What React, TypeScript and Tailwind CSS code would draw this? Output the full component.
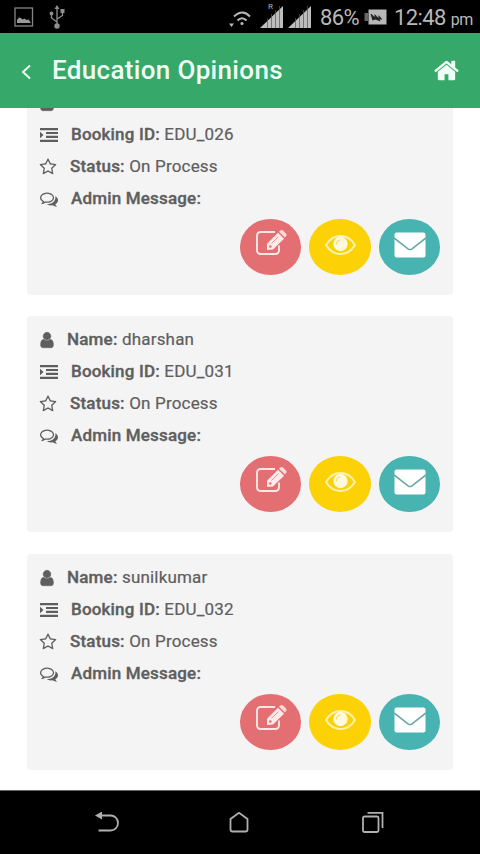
import type { ReactNode } from "react";

// the first card is scrolled under the header, its name row is hidden
const bookings = [
  { name: null, id: "EDU_026", status: "On Process", message: "" },
  { name: "dharshan", id: "EDU_031", status: "On Process", message: "" },
  { name: "sunilkumar", id: "EDU_032", status: "On Process", message: "" },
];

function UserIcon() {
  return (
    <svg viewBox="0 0 1792 1792" className="w-[18px] h-[18px] -ml-0.5 shrink-0" fill="currentColor" stroke="currentColor" strokeWidth="50">
      <path d="M1536 1399q0 109-62.5 187t-150.5 78h-854q-88 0-150.5-78t-62.5-187q0-85 8.5-160.5t31.5-152 58.5-131 94-89 134.5-34.5q131 128 313 128t313-128q76 0 134.5 34.5t94 89 58.5 131 31.5 152 8.5 160.5zm-256-887q0 159-112.5 271.5t-271.5 112.5-271.5-112.5-112.5-271.5 112.5-271.5 271.5-112.5 271.5 112.5 112.5 271.5z" />
    </svg>
  );
}

function IndentIcon() {
  return (
    <svg viewBox="0 0 18 16" className="w-[18px] h-4 shrink-0" fill="currentColor">
      <path d="M0 1h18v2.200H0zM6 4.900h12v2.200H6zM6 8.800h12V11H6zM0 12.700h18v2.200H0zM0 4.800 3.500 8 0 11.200z" />
    </svg>
  );
}

function StarIcon() {
  return (
    <svg viewBox="0 0 1792 1792" className="w-[18px] h-[18px] -ml-px shrink-0" fill="currentColor">
      <path d="M1201 1004l306-297-422-62-189-382-189 382-422 62 306 297-73 421 378-199 377 199zm527-357q0 22-26 48l-363 354 86 500q1 7 1 20 0 50-41 50-19 0-40-12l-449-236-449 236q-22 12-40 12-21 0-31.5-14.5t-10.5-35.5q0-6 2-20l86-500-364-354q-25-27-25-48 0-37 56-46l502-73 225-455q19-41 49-41t49 41l225 455 502 73q56 9 56 46z" />
    </svg>
  );
}

function CommentsIcon() {
  return (
    <svg viewBox="0 0 1792 1792" className="w-[18px] h-[18px] shrink-0" fill="currentColor">
      <path d="M704 384q-153 0-286 52t-211.5 141-78.5 191q0 82 53 158t149 132l97 56-35 84q34-20 62-39l44-31 53 10q78 14 153 14 153 0 286-52t211.5-141 78.5-191-78.5-191-211.5-141-286-52zm0-128q191 0 353.5 68.5t256.5 186.5 94 257-94 257-256.5 186.5-353.5 68.5q-86 0-176-16-124 88-278 128-36 9-86 16h-3q-11 0-20.5-8t-11.5-21q-1-3-1-6.5t.5-6.5 2-6l2.5-5 3.5-5.5 4-5 4.5-5 4-4.5q5-6 23-25t26-29.5 22.5-29 25-38.5 20.5-44q-124-72-195-177t-71-224q0-139 94-257t256.5-186.5 353.5-68.5zm822 1169q10 24 20.5 44t25 38.5 22.5 29 26 29.5 23 25q1 1 4 4.5t4.5 5 4 5 3.5 5.5l2.5 5 2 6 .5 6.5-1 6.5q-3 14-13 22t-22 7q-50-7-86-16-154-40-278-128-90 16-176 16-271 0-472-132 58 4 88 4 161 0 309-45t264-129q125-92 192-212t67-254q0-77-23-152 129 71 204 178t75 230q0 120-71 224.5t-195 176.5z" />
    </svg>
  );
}

function HomeIcon() {
  return (
    <svg viewBox="0 0 1792 1792" className="w-[27px] h-[27px]" fill="currentColor">
      <path d="M1472 992v480q0 26-19 45t-45 19h-384v-384h-256v384h-384q-26 0-45-19t-19-45v-480q0-1 .5-3t.5-3l575-474 575 474q1 2 1 6zm223-69l-62 74q-8 9-21 11h-3q-13 0-21-7l-692-577-692 577q-12 8-24 7-13-2-21-11l-62-74q-8-10-7-23.5t11-21.5l719-599q32-26 76-26t76 26l244 204v-195q0-14 9-23t23-9h192q14 0 23 9t9 23v408l219 182q10 8 11 21.5t-7 23.5z" />
    </svg>
  );
}

function EditIcon() {
  return (
    <svg viewBox="0 0 32 28" className="w-8 h-7" fill="none">
      <path d="M20 3H5.500A3.500 3.500 0 0 0 2 6.500v15A3.500 3.500 0 0 0 5.500 25h15a3.500 3.500 0 0 0 3.500-3.500v-5" stroke="#ffe6e6" strokeWidth="1.900" />
      <path d="M12 21v-6.300L23 3.700l6 6L18 20.500z" fill="#ffeaea" />
      <path d="m24 2.700 1.400-1.300q1.300-1 2.600 0l3 3q1.200 1.300 0 2.600L29.900 8.500z" fill="#ffdada" />
      <path d="m16.500 14.500 6.800-6.800" stroke="#e9898b" strokeWidth="0.900" />
      <circle cx="15.300" cy="17.500" r="1.300" fill="#e46f72" />
    </svg>
  );
}

function EyeIcon() {
  return (
    <svg viewBox="0 0 32 22" className="w-8 h-[22px]" fill="none">
      <path d="M2 11C5.500 5.300 10.200 2 16.500 2S27.500 5.300 31 11c-3.500 5.700-8.200 8.900-14.500 8.900S5.500 16.700 2 11z" stroke="#fff3b0" strokeWidth="2" />
      <circle cx="16.500" cy="10" r="7.200" fill="#fffadf" />
      <path d="M12.500 10a4.200 4.200 0 0 1 3.500-4" stroke="#fbdc5a" strokeWidth="1.200" strokeLinecap="round" />
    </svg>
  );
}

function MailIcon() {
  return (
    <svg viewBox="0 0 32 26" className="w-8 h-[26px]" fill="none">
      <rect x="0.500" y="0.500" width="31" height="25" rx="2" fill="#fff" />
      <path d="m0 6 14 10.800q2 1.400 4 0L32 6" stroke="#6aa9a6" strokeWidth="1.600" />
    </svg>
  );
}

function Row({ icon, label, value, gap }: { icon: ReactNode; label?: string; value?: string; gap: string }) {
  return (
    <div className={`flex items-center h-8 whitespace-nowrap ${gap}`}>
      {icon}
      {label && (
        <p className="[-webkit-text-stroke:0.2px_#5e5e5e]">
          <span className="font-medium [-webkit-text-stroke:0.35px_#5e5e5e]">{label}:</span> {value}
        </p>
      )}
    </div>
  );
}

function BookingCard({ name, id, status, message }: (typeof bookings)[number]) {
  return (
    <div className="h-[216px] shrink-0 rounded bg-[#f4f4f4] px-[13px] pt-2 text-[#5e5e5e] text-[17px] tracking-[0.18px]">
      <Row icon={<UserIcon />} label={name ? "Name" : undefined} value={name ?? undefined} gap="gap-[11px]" />
      <Row icon={<IndentIcon />} label="Booking ID" value={id} gap="gap-[13px]" />
      <Row icon={<StarIcon />} label="Status" value={status} gap="gap-[13px]" />
      <Row icon={<CommentsIcon />} label="Admin Message" value={message} gap="gap-[13px]" />
      <div className="flex justify-end gap-2 mt-1">
        <button className="w-[61.500px] h-14 rounded-[50%] bg-[#e46f72] flex justify-center pt-[10px] pl-px">
          <EditIcon />
        </button>
        <button className="w-[61.500px] h-14 rounded-[50%] bg-[#fcd106] flex justify-center pt-[15px]">
          <EyeIcon />
        </button>
        <button className="w-[61.500px] h-14 rounded-[50%] bg-[#47b4b2] flex justify-center pt-[13px] pl-px">
          <MailIcon />
        </button>
      </div>
    </div>
  );
}

function Signal() {
  return (
    <svg viewBox="0 0 23 22" className="w-[23px] h-[22px]">
      <path d="M0 22 23 0v22z" fill="#bdbdbd" />
      <path d="M7.500 12v10M11.500 8v14M15.500 4v18M19.500 0v22" stroke="#555" strokeWidth="0.700" />
    </svg>
  );
}

function StatusBar() {
  return (
    <div className="h-[33px] shrink-0 bg-black text-[#b8b8b8] flex items-center pl-[14px]">
      <svg viewBox="0 0 20 20" className="w-5 h-5" fill="none">
        <rect x="1" y="1" width="17.500" height="18" stroke="#858585" strokeWidth="1.300" />
        <path d="M3 16v-3l2-2.500 2 .5 1.500 1.500 2-1 2 1.500 2-.5L16.500 15v1z" fill="#999" />
      </svg>
      <svg viewBox="0 0 16 24" className="w-4 h-6 ml-[15px]" fill="none" stroke="#8f8f8f" strokeWidth="1.300">
        <path d="M8 3v18M8 17l-5.500-4V9.500M8 14l5.500-3.500V7" />
        <path d="m8 0 2.500 4h-5z" fill="#8f8f8f" stroke="none" />
        <circle cx="8" cy="21" r="2.700" fill="#8f8f8f" stroke="none" />
        <circle cx="2.500" cy="8.500" r="1.900" fill="#8f8f8f" stroke="none" />
        <path d="M11.500 4h4v4h-4z" fill="#8f8f8f" stroke="none" />
      </svg>
      <svg viewBox="0 0 22 18" className="w-[22px] h-[18px] shrink-0 ml-[164px] mt-1" fill="none" stroke="#b8b8b8" strokeWidth="2">
        <path d="M5 6.500q8.500-8 16 0M8.500 10.500q4.500-4.500 9 0" />
        <circle cx="13" cy="13.500" r="1.600" fill="#b8b8b8" stroke="none" />
        <path d="M0 13.500h5L2.500 17z" fill="#b8b8b8" stroke="none" />
      </svg>
      <div className="relative ml-[9px]">
        <Signal />
        <span className="absolute left-2 -top-[3px] text-[8px] leading-none">R</span>
      </div>
      <div className="ml-[5px]">
        <Signal />
      </div>
      <span className="ml-[9px] mt-0.5 text-[22px] leading-none tracking-[-0.6px] w-[39px] whitespace-nowrap">86%</span>
      <svg viewBox="0 0 22 16" className="w-[23px] h-4 shrink-0 ml-[5px]">
        <path d="M4 0.500h18v15H4z" fill="#b8b8b8" />
        <path d="M0 4h4v8H0z" fill="#666" />
        <path d="M6 5h1l3 3V5l4 4V6l4 4.500h-3l1 2-5-2-3 1z" fill="#222" />
      </svg>
      <span className="ml-[7px] mt-0.5 text-[22px] leading-none tracking-[-0.6px] whitespace-nowrap">
        12:48<span className="text-[16px] ml-[5px]">pm</span>
      </span>
    </div>
  );
}

function NavBar() {
  return (
    <div className="h-16 shrink-0 bg-black border-t border-[#666] flex items-center justify-between pl-[95px] pr-[96px]">
      <svg viewBox="0 0 24 22" className="w-6 h-[22px]" fill="none" stroke="#b0b0b0" strokeWidth="1.800">
        <path d="M5 3.500h10.500a7.500 7.500 0 0 1 0 15H3.500" />
        <path d="m0 3.500 7-4v8z" fill="#b0b0b0" stroke="none" />
      </svg>
      <svg viewBox="0 0 20 22" className="w-5 h-[22px] -ml-[3px]" fill="none" stroke="#b0b0b0" strokeWidth="1.800">
        <path d="M1.500 7 10 0.800 18.500 7v10.500q0 2-2 2h-13q-2 0-2-2z" />
      </svg>
      <svg viewBox="0 0 22 22" className="w-[22px] h-[22px]" fill="none" stroke="#b0b0b0" strokeWidth="1.800">
        <rect x="1" y="4.500" width="15.500" height="15.500" rx="1.500" />
        <path d="M5.500 0.900h15v15" />
      </svg>
    </div>
  );
}

export default function App() {
  return (
    <div className="w-[480px] h-[854px] flex flex-col overflow-hidden bg-white font-[Roboto,sans-serif]">
      <StatusBar />
      <header className="h-[75px] shrink-0 bg-[#36a869] text-[#effff5] flex items-center pl-[21px] pr-5">
        <svg viewBox="0 0 12 16" className="w-3 h-4 mt-0.5" fill="none" stroke="currentColor" strokeWidth="1.900">
          <path d="M9 1.500 2 8l7 6.500" />
        </svg>
        <h1 className="ml-[19px] -mt-0.5 text-[26px] font-medium leading-none tracking-[0.33px] flex-1">Education Opinions</h1>
        <HomeIcon />
      </header>
      <main className="flex-1 min-h-0 overflow-hidden px-[27px]">
        <div className="flex flex-col gap-[21.500px] -mt-[29.500px]">
          {bookings.map((b) => (
            <BookingCard key={b.id} {...b} />
          ))}
        </div>
      </main>
      <NavBar />
    </div>
  );
}
